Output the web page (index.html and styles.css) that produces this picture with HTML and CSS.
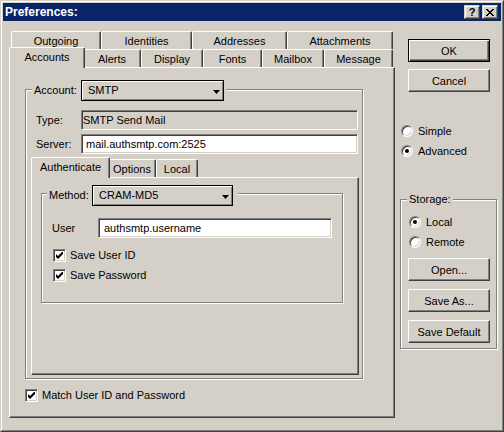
FILE: index.html
```html
<!DOCTYPE html>
<html>
<head>
<meta charset="utf-8">
<title>Preferences</title>
<link rel="stylesheet" href="styles.css">
</head>
<body>
<div class="window">
  <div class="frame">
    <div class="titlebar">
      <span class="title">Preferences:</span>
      <div class="tbtns">
        <span class="tbtn help">?</span>
        <span class="tbtn">
          <svg width="8" height="7" viewBox="0 0 8 7" shape-rendering="crispEdges"><g fill="#000"><rect x="0" y="0" width="2" height="1"/><rect x="6" y="0" width="2" height="1"/><rect x="1" y="1" width="2" height="1"/><rect x="5" y="1" width="2" height="1"/><rect x="2" y="2" width="4" height="1"/><rect x="3" y="3" width="2" height="1"/><rect x="2" y="4" width="4" height="1"/><rect x="1" y="5" width="2" height="1"/><rect x="5" y="5" width="2" height="1"/><rect x="0" y="6" width="2" height="1"/><rect x="6" y="6" width="2" height="1"/></g></svg>
        </span>
      </div>
    </div>
    <div class="client">
      <div class="tabctl main">
        <div class="tabrow">
          <div class="tab w-out">Outgoing</div>
          <div class="tab w-ide">Identities</div>
          <div class="tab w-add">Addresses</div>
          <div class="tab w-att">Attachments</div>
        </div>
        <div class="tabrow">
          <div class="tab sel w-acc">Accounts</div>
          <div class="tab w-ale">Alerts</div>
          <div class="tab w-dis">Display</div>
          <div class="tab w-fon">Fonts</div>
          <div class="tab w-mai">Mailbox</div>
          <div class="tab w-mes">Message</div>
        </div>
        <div class="panel main-panel">
          <div class="group g-account">
            <div class="ghead h-account">
              <span class="lbl l-account">Account:</span>
              <div class="dd dd-account"><span>SMTP</span><svg class="arrow" width="7" height="4" viewBox="0 0 7 4"><polygon points="0,0 7,0 3.5,4" fill="#000"/></svg></div>
            </div>
            <div class="frow r-type">
              <span class="lbl l-field">Type:</span>
              <div class="field f-type">SMTP Send Mail</div>
            </div>
            <div class="frow r-server">
              <span class="lbl l-field">Server:</span>
              <div class="field f-server">mail.authsmtp.com:2525</div>
            </div>
            <div class="tabctl inner">
              <div class="tabrow">
                <div class="tab sel w-auth">Authenticate</div>
                <div class="tab w-opt">Options</div>
                <div class="tab w-loc">Local</div>
              </div>
              <div class="panel inner-panel">
                <div class="group g-method">
                  <div class="ghead h-method">
                    <span class="lbl l-method">Method:</span>
                    <div class="dd dd-method"><span>CRAM-MD5</span><svg class="arrow" width="7" height="4" viewBox="0 0 7 4"><polygon points="0,0 7,0 3.5,4" fill="#000"/></svg></div>
                  </div>
                  <div class="frow r-user">
                    <span class="lbl l-user">User</span>
                    <div class="field f-user">authsmtp.username</div>
                  </div>
                  <div class="cbrow r-saveid">
                    <span class="cb"><svg width="7" height="7" viewBox="0 0 7 7"><path d="M0 2 L2 4 L6 0 L7 0 L7 2 L2 7 L0 5 Z" fill="#000"/></svg></span>
                    <span>Save User ID</span>
                  </div>
                  <div class="cbrow r-savepw">
                    <span class="cb"><svg width="7" height="7" viewBox="0 0 7 7"><path d="M0 2 L2 4 L6 0 L7 0 L7 2 L2 7 L0 5 Z" fill="#000"/></svg></span>
                    <span>Save Password</span>
                  </div>
                </div>
              </div>
            </div>
          </div>
          <div class="cbrow r-match">
            <span class="cb"><svg width="7" height="7" viewBox="0 0 7 7"><path d="M0 2 L2 4 L6 0 L7 0 L7 2 L2 7 L0 5 Z" fill="#000"/></svg></span>
            <span>Match User ID and Password</span>
          </div>
        </div>
      </div>
      <div class="side">
        <div class="btn def b-ok">OK</div>
        <div class="btn b-cancel">Cancel</div>
        <div class="radrow r-simple"><span class="radio"></span><span>Simple</span></div>
        <div class="radrow r-adv"><span class="radio on"></span><span>Advanced</span></div>
        <div class="group g-storage">
          <div class="ghead h-storage"><span class="lbl">Storage:</span></div>
          <div class="radrow r-local"><span class="radio on"></span><span>Local</span></div>
          <div class="radrow r-remote"><span class="radio"></span><span>Remote</span></div>
          <div class="btn b-open">Open...</div>
          <div class="btn b-saveas">Save As...</div>
          <div class="btn b-savedef">Save Default</div>
        </div>
      </div>
    </div>
  </div>
</div>
</body>
</html>
```

FILE: styles.css
```css
* { box-sizing: border-box; }
html, body { margin: 0; padding: 0; }
body {
  font-family: "Liberation Sans", Arial, sans-serif;
  font-size: 11px;
  color: #000;
  background: #d4d0c8;
}

.window {
  width: 504px;
  height: 432px;
  border: 1px solid;
  border-color: #d4d0c8 #404040 #404040 #d4d0c8;
  background: #d4d0c8;
}
.frame {
  height: 100%;
  border: 1px solid;
  border-color: #fff #808080 #808080 #fff;
  padding: 1px;
  display: flex;
  flex-direction: column;
}

/* title bar */
.titlebar {
  flex: none;
  height: 18px;
  background: #0a246a;
  display: flex;
  align-items: center;
  justify-content: space-between;
  padding: 0 3px 0 2px;
}
.title {
  color: #fff;
  font-weight: bold;
  font-size: 12px;
  line-height: 18px;
  white-space: nowrap;
}
.tbtns { display: flex; gap: 2px; }
.tbtn {
  width: 16px;
  height: 14px;
  background: #d4d0c8;
  border: 1px solid;
  border-color: #d4d0c8 #404040 #404040 #d4d0c8;
  box-shadow: inset 1px 1px #fff, inset -1px -1px #808080;
  display: flex;
  align-items: center;
  justify-content: center;
}
.tbtn.help {
  font-weight: bold;
  font-size: 11px;
  line-height: 12px;
}

/* client */
.client {
  flex: 1;
  display: flex;
  padding: 10px 0 0 6px;
}

/* tab controls */
.tabctl.main { width: 386px; flex: none; }
.tabctl.inner { width: 328px; margin: 5px 0 0 5px; }
.tabrow {
  display: flex;
  height: 18px;
  margin-left: 2px;
}
.tab {
  flex: none;
  height: 18px;
  background: #d4d0c8;
  border: 1px solid;
  border-bottom: 0;
  border-color: #fff #404040 #fff #fff;
  border-radius: 2px 2px 0 0;
  box-shadow: inset -1px 0 #808080;
  padding-top: 3px;
  line-height: 13px;
  text-align: center;
  white-space: nowrap;
}
.tab.sel {
  height: 21px;
  margin: -2px -2px -1px -2px;
  position: relative;
  z-index: 1;
}
.w-out { width: 90px; }
.w-ide { width: 91px; }
.w-add { width: 95px; }
.w-att { width: 106px; }
.w-acc { width: 76px; }
.w-ale { width: 58px; }
.w-dis { width: 62px; }
.w-fon { width: 59px; }
.w-mai { width: 62px; }
.w-mes { width: 69px; }
.w-auth { width: 79px; }
.w-opt { width: 48px; }
.w-loc { width: 42px; }

.panel {
  border: 1px solid;
  border-color: #fff #404040 #404040 #fff;
  box-shadow: inset -1px -1px #808080;
}
.main-panel { height: 351px; padding: 21px 0 0 15px; }
.inner-panel { height: 198px; padding: 15px 0 0 9px; }

/* group boxes */
.group {
  border: 1px solid #808080;
  box-shadow: inset 1px 1px #fff, 1px 1px #fff;
}
.g-account { width: 338px; height: 290px; }
.g-method { width: 302px; height: 110px; }
.g-storage { width: 97px; height: 150px; margin: 42px 0 0 5px; }

.ghead {
  display: flex;
  align-items: center;
  width: max-content;
  background: #d4d0c8;
  line-height: 13px;
}
.h-account { margin: -10px 0 0 6px; padding: 0 2px; }
.h-method { margin: -9px 0 0 5px; padding: 0 5px 0 2px; }
.h-storage { margin: -7px 0 0 6px; padding: 0 2px; height: 13px; }

.lbl { white-space: nowrap; line-height: 13px; }
.l-account { width: 47px; }
.l-method { width: 43px; }
.l-field { width: 45px; margin-left: 10px; }
.l-user { width: 46px; margin-left: 10px; }

/* dropdown (popup button) */
.dd {
  display: flex;
  align-items: center;
  justify-content: space-between;
  height: 21px;
  border: 1px solid #000;
  box-shadow: inset 1px 1px #fff, inset -1px -1px #808080;
  padding: 0 3px 0 6px;
  white-space: nowrap;
}
.dd-account { width: 143px; }
.dd-method { width: 141px; }
.arrow { margin-top: 2px; flex: none; }

/* text fields */
.frow {
  display: flex;
  align-items: center;
  height: 20px;
}
.r-type { margin-top: 9px; }
.r-server { margin-top: 4px; }
.r-user { margin-top: 12px; }
.field {
  height: 20px;
  display: flex;
  align-items: center;
  background: #fff;
  border: 1px solid;
  border-color: #808080 #fff #fff #808080;
  box-shadow: inset 1px 1px #404040, inset -1px -1px #d4d0c8;
  white-space: nowrap;
  overflow: hidden;
}
.f-type { width: 277px; background: #d4d0c8; padding-left: 1px; }
.f-server { width: 277px; padding-left: 4px; }
.f-user { width: 234px; padding-left: 5px; }

/* checkboxes */
.cbrow {
  display: flex;
  align-items: center;
  gap: 4px;
  height: 13px;
  line-height: 13px;
  white-space: nowrap;
}
.r-saveid { margin: 11px 0 0 11px; }
.r-savepw { margin: 7px 0 0 11px; }
.r-match { margin-top: 10px; }
.cb {
  flex: none;
  width: 13px;
  height: 13px;
  background: #fff;
  border: 1px solid;
  border-color: #808080 #fff #fff #808080;
  box-shadow: inset 1px 1px #404040, inset -1px -1px #d4d0c8;
  display: flex;
  align-items: center;
  justify-content: center;
}

/* side column */
.side { width: 106px; flex: none; padding-top: 8px; }
.btn {
  width: 82px;
  height: 23px;
  display: flex;
  align-items: center;
  justify-content: center;
  border: 1px solid;
  border-color: #fff #404040 #404040 #fff;
  box-shadow: inset -1px -1px #808080;
  white-space: nowrap;
}
.btn.def {
  border: 1px solid #000;
  box-shadow: inset 1px 1px #fff, inset -1px -1px #404040, inset -2px -2px #808080;
}
.b-ok { margin-left: 13px; }
.b-cancel { margin: 7px 0 0 13px; }
.b-open { margin: 10px 0 0 7px; }
.b-saveas { margin: 8px 0 0 7px; }
.b-savedef { margin: 8px 0 0 7px; }

/* radios */
.radrow {
  display: flex;
  align-items: center;
  gap: 5px;
  height: 12px;
  line-height: 12px;
  white-space: nowrap;
}
.r-simple { margin: 33px 0 0 6px; }
.r-adv { margin: 8px 0 0 6px; }
.r-local { margin: 10px 0 0 8px; }
.r-remote { margin: 8px 0 0 8px; }
.radio {
  flex: none;
  width: 12px;
  height: 12px;
  border-radius: 50%;
  background: #fff;
  border: 1px solid;
  border-color: #808080 #fff #fff #808080;
  box-shadow: inset 1px 1px #404040, inset -1px -1px #d4d0c8;
  display: flex;
  align-items: center;
  justify-content: center;
}
.radio.on::after {
  content: "";
  width: 4px;
  height: 4px;
  border-radius: 50%;
  background: #000;
}
```
